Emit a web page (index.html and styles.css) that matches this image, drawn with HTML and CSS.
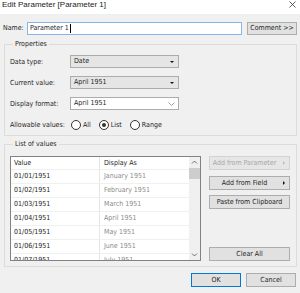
FILE: index.html
```html
<!DOCTYPE html>
<html>
<head>
<meta charset="utf-8">
<link rel="stylesheet" href="styles.css">
</head>
<body>
<div class="titlebar">
  <span class="title">Edit Parameter [Parameter 1]</span>
  <svg class="close" width="7" height="7" viewBox="0 0 7 7"><path d="M0.5 0.5L6.5 6.5M6.5 0.5L0.5 6.5" stroke="#333" stroke-width="0.8" fill="none"/></svg>
</div>
<div class="dialog">
  <div class="name-row">
    <span class="name-label">Name:</span>
    <div class="textbox">Parameter 1<span class="caret"></span></div>
    <button class="btn comment">Comment &gt;&gt;</button>
  </div>

  <fieldset class="group props">
    <legend>Properties</legend>
    <div class="field">
      <span class="flabel">Data type:</span>
      <div class="select">Date<span class="tri"></span></div>
    </div>
    <div class="field">
      <span class="flabel">Current value:</span>
      <div class="select">April 1951<span class="tri"></span></div>
    </div>
    <div class="field">
      <span class="flabel">Display format:</span>
      <div class="combo">April 1951<svg class="chev" width="7" height="4" viewBox="0 0 7 4"><path d="M0.5 0.5L3.5 3.5L6.5 0.5" stroke="#888" stroke-width="0.8" fill="none"/></svg></div>
    </div>
    <div class="field radios">
      <span class="flabel">Allowable values:</span>
      <span class="opt"><span class="radio"></span>All</span>
      <span class="opt"><span class="radio on"></span>List</span>
      <span class="opt"><span class="radio"></span>Range</span>
    </div>
  </fieldset>

  <fieldset class="group values">
    <legend>List of values</legend>
    <div class="values-body">
      <div class="table">
        <div class="grid">
          <div class="row head"><span class="c1">Value</span><span class="c2">Display As</span></div>
          <div class="row"><span class="c1">01/01/1951</span><span class="c2">January 1951</span></div>
          <div class="row"><span class="c1">01/02/1951</span><span class="c2">February 1951</span></div>
          <div class="row"><span class="c1">01/03/1951</span><span class="c2">March 1951</span></div>
          <div class="row"><span class="c1">01/04/1951</span><span class="c2">April 1951</span></div>
          <div class="row"><span class="c1">01/05/1951</span><span class="c2">May 1951</span></div>
          <div class="row"><span class="c1">01/06/1951</span><span class="c2">June 1951</span></div>
          <div class="row"><span class="c1">01/07/1951</span><span class="c2">July 1951</span></div>
        </div>
        <div class="vscroll">
          <svg class="arrow" width="11" height="11" viewBox="0 0 11 11"><path d="M3 6.5L5.5 4L8 6.5" stroke="#606060" stroke-width="0.9" fill="none"/></svg>
          <div class="thumb"></div>
          <div class="track"></div>
          <svg class="arrow" width="11" height="11" viewBox="0 0 11 11"><path d="M3 4.5L5.5 7L8 4.5" stroke="#606060" stroke-width="0.9" fill="none"/></svg>
        </div>
      </div>
      <div class="side">
        <button class="btn side-btn has-menu disabled">Add from Parameter<span class="mtri light"></span></button>
        <button class="btn side-btn has-menu">Add from Field<span class="mtri"></span></button>
        <button class="btn side-btn">Paste from Clipboard</button>
        <div class="spacer"></div>
        <button class="btn side-btn">Clear All</button>
      </div>
    </div>
  </fieldset>

  <div class="footer">
    <button class="btn ok">OK</button>
    <button class="btn">Cancel</button>
  </div>
</div>
</body>
</html>
```
FILE: styles.css
```css
* { box-sizing: border-box; }
html, body { margin: 0; padding: 0; }
body {
  width: 300px;
  height: 293px;
  overflow: hidden;
  background: #f0f0f0;
  font-family: "DejaVu Sans Condensed", "Liberation Sans", Arial, sans-serif;
  font-size: 7px;
  color: #1e1e1e;
}
.titlebar {
  height: 14px;
  background: #ffffff;
  display: flex;
  align-items: flex-start;
  justify-content: space-between;
  padding: 0 4px 0 2px;
}
.title {
  font-family: "Liberation Sans", Arial, sans-serif;
  font-size: 8px;
  line-height: 10px;
  color: #222;
}
.close { margin-top: 1px; }

.dialog { padding: 0 3px 0 3px; }

.name-row {
  margin-top: 8px;
  height: 13px;
  display: flex;
  align-items: stretch;
}
.name-label { width: 24px; line-height: 13px; }
.textbox {
  width: 215px;
  border: 1px solid #86b7e4;
  background: #fff;
  line-height: 11px;
  padding-left: 2px;
  display: flex;
  align-items: center;
}
.caret { display: inline-block; width: 1px; height: 9px; background: #000; margin-left: 1px; }
.btn {
  font: inherit;
  color: #1e1e1e;
  background: #e1e1e1;
  border: 1px solid #adadad;
  padding: 0;
  margin: 0;
  height: 14px;
  line-height: 12px;
  text-align: center;
}
.comment { margin-left: 5px; width: 50px; height: 13px; line-height: 11px; }

.group {
  margin: 0 0 0 1px;
  padding: 0;
  border: 1px solid #dcdcdc;
  min-width: 0;
}
.group legend {
  margin-left: 3px;
  padding: 0 2px;
  line-height: 9px;
}
.props { margin-top: 5px; padding: 6px 0 4px 5px; }
.field {
  display: flex;
  align-items: center;
  height: 13px;
  margin-bottom: 8px;
}
.field.radios { margin-top: 2px; margin-bottom: 0; }
.flabel { width: 60px; }
.select, .combo {
  width: 109px;
  height: 13px;
  border: 1px solid #acacac;
  background: #e5e5e5;
  padding-left: 3px;
  display: flex;
  align-items: center;
  justify-content: space-between;
  line-height: 11px;
}
.combo { background: #fff; }
.tri {
  width: 0; height: 0;
  border-left: 2px solid transparent;
  border-right: 2px solid transparent;
  border-top: 2px solid #111;
  margin-right: 4px;
}
.chev { margin-right: 3px; }
.opt { display: flex; align-items: center; margin-right: 7px; }
.radio {
  width: 10px; height: 10px;
  border: 1px solid #333;
  border-radius: 50%;
  background: #fff;
  margin: 0 2px 0 1px;
  display: flex;
  align-items: center;
  justify-content: center;
}
.radio.on::after {
  content: "";
  width: 4px; height: 4px;
  border-radius: 50%;
  background: #333;
}

.values { margin-top: 4px; padding: 7px 0 5px 5px; }
.values-body { display: flex; height: 105px; }
.table {
  width: 191px;
  border: 1px solid #828282;
  background: #fff;
  display: flex;
  overflow: hidden;
}
.grid { flex: 1; overflow: hidden; }
.row {
  display: grid;
  grid-template-columns: 89px 1fr;
  height: 14px;
  border-bottom: 1px solid #f0f0f0;
  line-height: 13px;
  white-space: nowrap;
}
.row.head { height: 13px; line-height: 12px; }
.c1 { padding-left: 3px; border-right: 1px solid #e6e6e6; }
.c2 { padding-left: 4px; color: #8a8a8a; }
.head .c2 { color: #1e1e1e; }
.vscroll {
  width: 11px;
  background: #f0f0f0;
  display: flex;
  flex-direction: column;
}
.arrow { flex: none; }
.thumb { height: 11px; background: #cdcdcd; }
.track { flex: 1; }

.side {
  margin-left: 8px;
  width: 81px;
  display: flex;
  flex-direction: column;
  gap: 5.5px;
}
.side-btn {
  position: relative;
  width: 81px;
}
.has-menu { padding-right: 10px; }
.disabled { color: #a6a6a6; border-color: #d3d3d3; background: #e6e6e6; }
.mtri {
  position: absolute;
  right: 4px;
  top: 4px;
  width: 0; height: 0;
  border-top: 2px solid transparent;
  border-bottom: 2px solid transparent;
  border-left: 2px solid #111;
}
.mtri.light { border-left-color: #bbb; }
.spacer { flex: 1; }

.footer {
  margin-top: 6px;
  display: flex;
  justify-content: flex-end;
  gap: 5px;
  padding-right: 1px;
}
.footer .btn { width: 50px; }
.ok { border-color: #0078d7; }
```
